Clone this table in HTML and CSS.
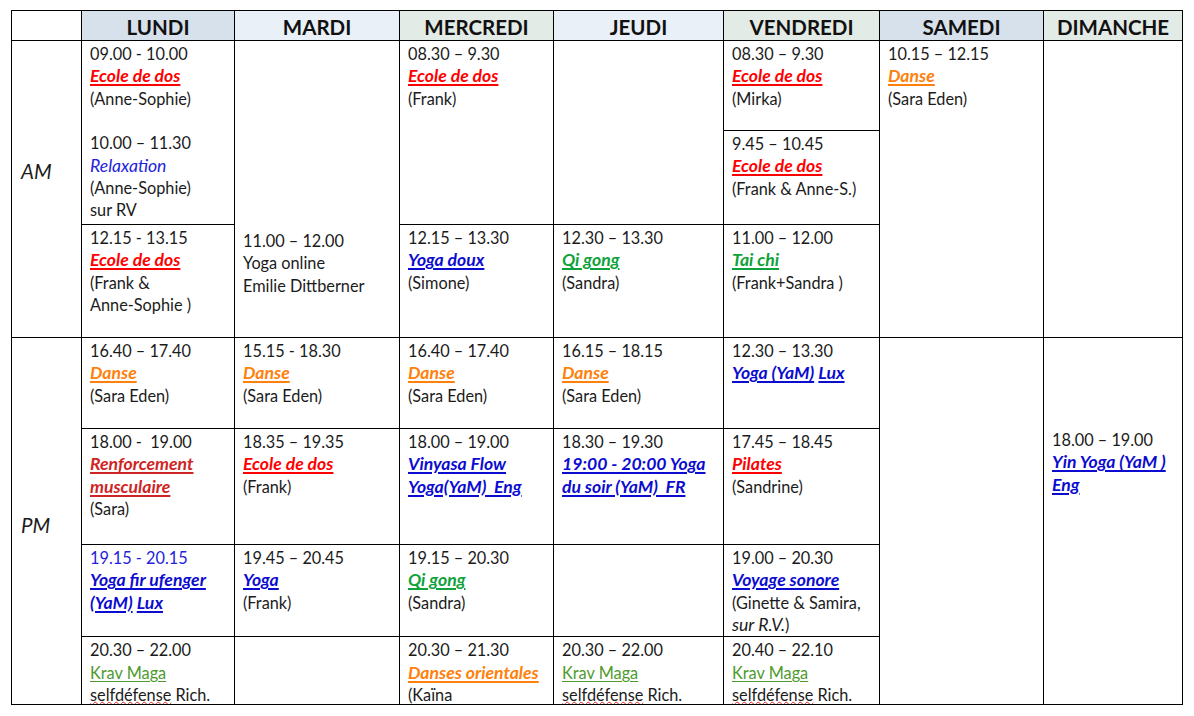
FILE: index.html
```html
<!DOCTYPE html>
<html lang="fr">
<head>
<meta charset="utf-8">
<title>Horaire des cours</title>
<link rel="stylesheet" href="styles.css">
</head>
<body>
<div class="page">
<table class="schedule">
  <colgroup>
    <col class="c-label"><col class="c-lun"><col class="c-mar"><col class="c-mer"><col class="c-jeu"><col class="c-ven"><col class="c-sam"><col class="c-dim">
  </colgroup>
  <thead>
    <tr class="r-head">
      <th class="blank"></th>
      <th class="h-a">LUNDI</th>
      <th class="h-b">MARDI</th>
      <th class="h-c">MERCREDI</th>
      <th class="h-b">JEUDI</th>
      <th class="h-c">VENDREDI</th>
      <th class="h-a">SAMEDI</th>
      <th class="h-c">DIMANCHE</th>
    </tr>
  </thead>
  <tbody>
    <tr class="r1">
      <td class="label label-am" rowspan="3">AM</td>
      <td rowspan="2">09.00 - 10.00<br><span class="c red">Ecole de dos</span><br>(Anne-Sophie)<br><br>10.00 – 11.30<br><span class="relax">Relaxation</span><br>(Anne-Sophie)<br>sur RV</td>
      <td rowspan="3" class="mardi-am">11.00 – 12.00<br>Yoga online<br>Emilie Dittberner</td>
      <td rowspan="2">08.30 – 9.30<br><span class="c red">Ecole de dos</span><br>(Frank)</td>
      <td rowspan="2"></td>
      <td>08.30 – 9.30<br><span class="c red">Ecole de dos</span><br>(Mirka)</td>
      <td rowspan="3">10.15 – 12.15<br><span class="c orange">Danse</span><br>(Sara Eden)</td>
      <td rowspan="3"></td>
    </tr>
    <tr class="r2">
      <td>9.45 – 10.45<br><span class="c red">Ecole de dos</span><br>(Frank &amp; Anne-S.)</td>
    </tr>
    <tr class="r3">
      <td>12.15 - 13.15<br><span class="c red">Ecole de dos</span><br>(Frank &amp;<br>Anne-Sophie )</td>
      <td>12.15 – 13.30<br><span class="c blue">Yoga doux</span><br>(Simone)</td>
      <td>12.30 – 13.30<br><span class="c green">Qi gong</span><br>(Sandra)</td>
      <td>11.00 – 12.00<br><span class="c green">Tai chi</span><br>(Frank+Sandra )</td>
    </tr>
    <tr class="r4">
      <td class="label label-pm" rowspan="4">PM</td>
      <td>16.40 – 17.40<br><span class="c orange">Danse</span><br>(Sara Eden)</td>
      <td>15.15 - 18.30<br><span class="c orange">Danse</span><br>(Sara Eden)</td>
      <td>16.40 – 17.40<br><span class="c orange">Danse</span><br>(Sara Eden)</td>
      <td>16.15 – 18.15<br><span class="c orange">Danse</span><br>(Sara Eden)</td>
      <td>12.30 – 13.30<br><span class="c blue">Yoga (YaM)</span> <span class="c blue">Lux</span></td>
      <td rowspan="4"></td>
      <td rowspan="4" class="dim-pm">18.00 – 19.00<br><span class="c blue">Yin Yoga (YaM )</span><br><span class="c blue">Eng</span></td>
    </tr>
    <tr class="r5">
      <td>18.00 -&nbsp; 19.00<br><span class="c dark-red">Renforcement</span><br><span class="c dark-red">musculaire</span><br>(Sara)</td>
      <td>18.35 – 19.35<br><span class="c red">Ecole de dos</span><br>(Frank)</td>
      <td>18.00 – 19.00<br><span class="c blue">Vinyasa Flow</span><br><span class="c blue">Yoga(YaM)&nbsp; Eng</span></td>
      <td>18.30 – 19.30<br><span class="c blue">19:00 - 20:00 Yoga</span><br><span class="c blue">du soir (YaM)&nbsp; FR</span></td>
      <td>17.45 – 18.45<br><span class="c red">Pilates</span><br>(Sandrine)</td>
    </tr>
    <tr class="r6">
      <td><span class="blue-time">19.15 - 20.15</span><br><span class="c blue">Yoga fir ufenger</span><br><span class="c blue">(YaM)</span> <span class="c blue">Lux</span></td>
      <td>19.45 – 20.45<br><span class="c blue">Yoga</span><br>(Frank)</td>
      <td>19.15 – 20.30<br><span class="c green">Qi gong</span><br>(Sandra)</td>
      <td></td>
      <td>19.00 – 20.30<br><span class="c blue">Voyage sonore</span><br>(Ginette &amp; Samira,<br><em class="it">sur R.V.</em>)</td>
    </tr>
    <tr class="r7">
      <td><div class="clip">20.30 – 22.00<br><span class="krav">Krav Maga</span><br><span class="spell">selfdéfense</span> Rich.</div></td>
      <td><div class="clip"></div></td>
      <td><div class="clip">20.30 – 21.30<br><span class="c orange">Danses orientales</span><br>(Kaïna</div></td>
      <td><div class="clip">20.30 – 22.00<br><span class="krav">Krav Maga</span><br><span class="spell">selfdéfense</span> Rich.</div></td>
      <td><div class="clip">20.40 – 22.10<br><span class="krav">Krav Maga</span><br><span class="spell">selfdéfense</span> Rich.</div></td>
    </tr>
  </tbody>
</table>
</div>
</body>
</html>
```

FILE: styles.css
```css
html, body {
  margin: 0;
  padding: 0;
  background: #ffffff;
}

.page {
  padding: 10px 0 0 11px;
  font-family: "Lato", "Carlito", "Open Sans", sans-serif;
  font-size: 16.3px;
  line-height: 22.33px;
  color: #1b1b1b;
}

.schedule {
  border-collapse: collapse;
  table-layout: fixed;
  width: 1172px;
}

.c-label { width: 70px; }
.c-lun { width: 153px; }
.c-mar { width: 165px; }
.c-mer { width: 154px; }
.c-jeu { width: 170px; }
.c-ven { width: 156px; }
.c-sam { width: 164px; }
.c-dim { width: 139px; }

.schedule th,
.schedule td {
  border: 1px solid #000;
  padding: 2px 4px 0 8px;
  vertical-align: top;
  text-align: left;
  white-space: nowrap;
  overflow: hidden;
}

.schedule th {
  font-weight: 700;
  font-size: 20.5px;
  line-height: 24px;
  text-align: center;
  vertical-align: middle;
  padding: 2px 0 0 0;
  color: #111;
}

.schedule th.blank { background: #fff; }
.h-a { background: #d6e1ec; }
.h-b { background: #e9f0f8; }
.h-c { background: #e3ebe7; }

.r-head { height: 30px; }
.r1 { height: 90px; }
.r2 { height: 94px; }
.r3 { height: 113px; }
.r4 { height: 91px; }
.r5 { height: 116px; }
.r6 { height: 90px; }
.r7 { height: 67px; }

.schedule td.label {
  font-style: italic;
  font-size: 20.5px;
  line-height: 24px;
  padding-left: 9px;
}
.schedule td.label-am { padding-top: 118px; }
.schedule td.label-pm { padding-top: 175px; }

.schedule td.mardi-am { padding-top: 189px; }
.schedule td.dim-pm { padding-top: 91px; }

.c {
  font-weight: 700;
  font-style: italic;
  font-size: 17.6px;
  text-decoration: underline;
  text-decoration-thickness: 1.5px;
  text-underline-offset: 2px;
}
.red { color: #ff0000; }
.dark-red { color: #d02424; }
.orange { color: #ff800a; }
.blue { color: #0c0cd0; }
.green { color: #0fa23a; }

.relax {
  font-style: italic;
  font-size: 17.6px;
  color: #2323dc;
}
.blue-time { color: #2323dc; }

.it {
  font-style: italic;
  font-size: 17.6px;
}

.krav {
  color: #4e9a2c;
  text-decoration: underline;
  text-decoration-thickness: 1px;
  text-underline-offset: 2px;
}

.spell {
  text-decoration: underline wavy #e02020;
  text-decoration-thickness: 1px;
  text-underline-offset: 0px;
}

.clip {
  height: 65px;
  overflow: hidden;
}
```
